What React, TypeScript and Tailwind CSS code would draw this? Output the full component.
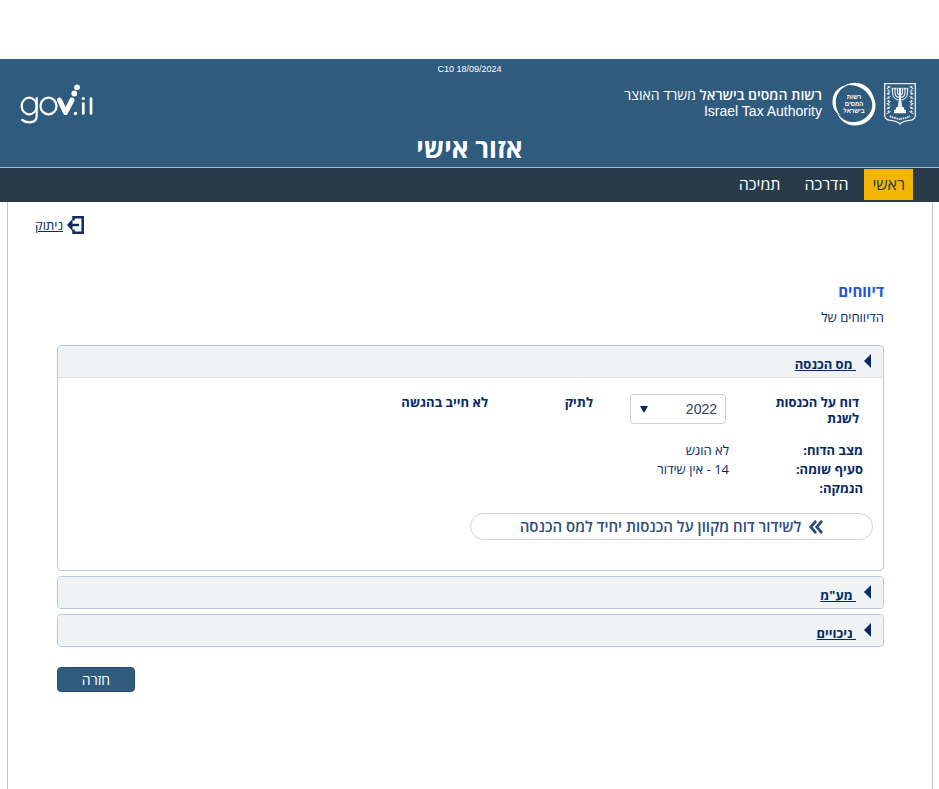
import { useState } from 'react'
import type { ReactNode } from 'react'

function StateEmblem() {
  return (
    <svg viewBox="0 0 32 42" className="h-[42px] w-8" fill="none" stroke="#e6edf3" aria-label="סמל המדינה" role="img">
      <path d="M.7.7h30.6v31.5c0 3.6-2.600 4.800-5.600 5.200-4.200.5-7.600 1-9.700 3.600-2.100-2.600-5.500-3.100-9.700-3.600-3-.4-5.600-1.600-5.600-5.200z" strokeWidth="1.300" />
      <path d="M4.500 3v28M27.500 3v28" strokeWidth="1.800" strokeDasharray="2 1.500" />
      <path d="M2.500 6l4-2.500M2.500 11l4-2.500M2.500 16l4-2.500M2.500 21l4-2.500M2.500 26l4-2.500M2.500 31l4-2.500M29.500 6l-4-2.500M29.500 11l-4-2.500M29.500 16l-4-2.500M29.500 21l-4-2.500M29.500 26l-4-2.500M29.500 31l-4-2.500" strokeWidth="1" />
      <path d="M8.500 6v3.500c0 4.500 3 7.500 7.500 7.500s7.500-3 7.500-7.500V6M11 6v3.500c0 3 2 5 5 5s5-2 5-5V6M13.500 6v3c0 1.800 1 3 2.500 3s2.500-1.200 2.500-3V6" strokeWidth="1.200" />
      <path d="M7.500 5.500h17" strokeWidth="1.300" strokeDasharray="2 .5" />
      <path d="M16 5v17" strokeWidth="2" />
      <path d="M14.500 18h3l.7 6h-4.400z" fill="#e6edf3" stroke="none" />
      <path d="M12.500 24h7l1.200 3h-9.400zM10 27h12v3.200H10z" fill="#fff" stroke="none" />
      <path d="M6 33c3 2.500 7 1.500 10 3.700 3-2.200 7-1.200 10-3.700" strokeWidth="1.800" strokeDasharray="1.500 .8" />
    </svg>
  )
}

function TaxAuthorityLogo() {
  return (
    <svg viewBox="0 0 44 44" className="size-11" role="img" aria-label="רשות המסים בישראל">
      <path
        fill="#fff"
        d="M13 3.500C21-1.500 33 0 39 9.500c4 6.500 4.500 14 1 21 1.300-7.500.2-13.500-4-18.500C30.500 4.800 21 2 13 3.500z"
      />
      <path fill="#fff" d="M17 3C8 5.500 3.500 13 3.800 21c.2 5 1.700 9.500 5 13C3 30.500 0 25 .5 18.500 1.200 9 8.500 3 17 3z" />
      <path fill="#fff" d="M4.500 30c4 7 11 10.500 18 10C33 39.300 40.500 31.500 41 20c.2-2.500-.1-4.500-.8-6.500C43.500 18 44.300 23.500 42.700 29 40 38 32 43.700 22.500 43.500 14 43.200 7.500 38 4.500 30z" />
      <g fill="#fff" fontFamily="Liberation Sans, sans-serif" fontWeight="700" fontSize="6" textAnchor="middle" direction="rtl">
        <text x="22" y="17">רשות</text>
        <text x="22" y="24">המסים</text>
        <text x="22" y="31">בישראל</text>
      </g>
    </svg>
  )
}

function GovLogo() {
  return (
    <svg viewBox="0 0 74 41" className="h-[41px] w-[74px]" fill="none" stroke="#fff" role="img" aria-label="gov.il">
      <ellipse cx="9.200" cy="22" rx="7.500" ry="8.300" strokeWidth="2.200" />
      <path d="M16.700 14v18c0 4-2.800 6.300-7.500 6.300-3 0-5-.8-7-2.300" strokeWidth="2.200" strokeLinecap="round" />
      <ellipse cx="28.500" cy="22" rx="8" ry="8.300" strokeWidth="2.200" />
      <path d="M39.500 16l6 12.500L52 16" strokeWidth="5" strokeLinecap="round" strokeLinejoin="round" />
      <g fill="#fff" stroke="none">
        <circle cx="54.300" cy="9.500" r="2.900" />
        <circle cx="57" cy="3.300" r="2.900" />
        <circle cx="55.500" cy="29.500" r="1.800" />
        <circle cx="63.300" cy="14.500" r="1.600" />
      </g>
      <path d="M63.300 19.500v10M71 14.500v15" strokeWidth="2.700" strokeLinecap="round" />
    </svg>
  )
}

function LogoutIcon() {
  return (
    <svg viewBox="0 0 17 18" className="h-[18px] w-[17px]" fill="none" stroke="#0d2b60" aria-hidden="true">
      <path d="M6.500 4.500V1.300h9.200v15.400H6.500v-3.200" strokeWidth="2.500" />
      <path d="M4 9h8" strokeWidth="2.500" />
      <path d="M0 9l5.500-6v12z" fill="#0d2b60" stroke="none" />
    </svg>
  )
}

type SectionProps = { title: string; open: boolean; onToggle: () => void; children?: ReactNode }

function Section({ title, open, onToggle, children }: SectionProps) {
  return (
    <section className="overflow-hidden rounded border border-[#b9cae0] bg-white">
      <h2 className={open ? 'border-b border-[#d9dfe4] bg-[#eff3f4]' : 'bg-[#eff3f4]'}>
        <button
          type="button"
          aria-expanded={open}
          onClick={onToggle}
          className="flex h-[31px] w-full items-start gap-2 px-3 text-[13px] leading-5 font-bold"
        >
          <svg viewBox="0 0 7 14" className="mt-2 h-3.5 w-[7px]" fill="#062a63" aria-hidden="true">
            <path d="M7 0v14L0 7z" />
          </svg>
          <span className="mt-2 whitespace-pre underline">{' ' + title}</span>
        </button>
      </h2>
      {open && children}
    </section>
  )
}

const facts = [
  { label: 'מצב הדוח:', value: 'לא הוגש' },
  { label: 'סעיף שומה:', value: '14 - אין שידור' },
  { label: 'הנמקה:', value: '' },
]

export default function App() {
  const [openSection, setOpenSection] = useState('income')
  const toggle = (id: string) => setOpenSection(openSection === id ? '' : id)

  return (
    <div
      dir="rtl"
      className="flex min-h-screen flex-col bg-white pt-[59px] font-['Open_Sans','Liberation_Sans',sans-serif] text-[13px] text-[#062a63]"
    >
      <header className="border-b border-[#a9bfce] bg-[#2f5b7f] pt-1 text-white">
        <p className="text-center font-['Liberation_Sans',Arial,sans-serif] text-[9px] leading-3" dir="ltr">C10 18/09/2024</p>
        <div className="flex items-center justify-between pt-[7px] pr-[23px] pl-5">
          <div className="flex items-center gap-2">
            <StateEmblem />
            <TaxAuthorityLogo />
            <div className="px-0.5 pb-0.5 text-sm leading-[17px]">
              <p>
                <strong className="font-semibold">רשות המסים בישראל</strong> משרד האוצר
              </p>
              <p dir="ltr" className="text-right font-['Liberation_Sans',Arial,sans-serif]">Israel Tax Authority</p>
            </div>
          </div>
          <GovLogo />
        </div>
        <h1 className="pt-1.5 pb-[3px] text-center text-[26px] leading-8 font-bold">אזור אישי</h1>
      </header>

      <nav className="flex items-center gap-2 bg-[#293b4b] px-[26px] pt-px pb-0.5 text-base leading-[31px] text-white">
        <a href="#main" className="bg-[#f3b500] px-2 text-[#293b4b]">ראשי</a>
        <a href="#guide" className="px-2">הדרכה</a>
        <a href="#support" className="px-2">תמיכה</a>
      </nav>

      <main className="mr-1.5 ml-[7px] grow border-x border-[#c4c4c4] pt-[13px] pr-12 pl-[49px]">
        <div className="-ml-[22px] flex justify-end">
          <a href="#logout" className="flex items-center gap-1 leading-5">
            <LogoutIcon />
            <span className="underline">ניתוק</span>
          </a>
        </div>

        <h2 className="mt-[46px] text-[15px] leading-5 font-bold text-[#2354dc]">דיווחים</h2>
        <p className="mt-1.5 leading-5">הדיווחים של</p>

        <div className="mt-[18px] flex flex-col gap-[5px]">
          <Section title="מס הכנסה" open={openSection === 'income'} onToggle={() => toggle('income')}>
            <div className="px-2.5 pb-[30px]">
              <div className="flex items-start pt-4 pr-3.5 leading-4 font-bold">
                <label htmlFor="year" className="w-[133px] pl-10">דוח על הכנסות לשנת</label>
                <div className="relative font-normal">
                  <select
                    id="year"
                    defaultValue="2022"
                    className="h-[30px] w-24 appearance-none rounded border border-[#cfcfcf] bg-white px-2 font-['Liberation_Sans',Arial,sans-serif] text-sm text-[#2d4266]"
                  >
                    <option>2022</option>
                    <option>2021</option>
                    <option>2020</option>
                  </select>
                  <svg viewBox="0 0 8 7" className="pointer-events-none absolute top-3 left-2.5 h-[7px] w-2" fill="#062a63" aria-hidden="true">
                    <path d="M0 0h8L4 7z" />
                  </svg>
                </div>
                <span className="mr-[37px] w-[105px]">לתיק</span>
                <span>לא חייב בהגשה</span>
              </div>

              <dl className="mt-[15px] pr-2.5 leading-[19px]">
                {facts.map((fact) => (
                  <div key={fact.label} className="flex">
                    <dt className="w-[134px] font-bold">{fact.label}</dt>
                    <dd>{fact.value}</dd>
                  </div>
                ))}
              </dl>

              <button
                type="button"
                className="mt-[15px] flex h-[27px] w-[403px] items-center justify-center gap-2 rounded-full border border-[#ccd3e0] text-[15px] font-semibold text-[#2d4d7d]"
              >
                <svg viewBox="0 0 14 14" className="size-3.5" fill="none" stroke="currentColor" strokeWidth="2.800" aria-hidden="true">
                  <path d="M7 .8L1.800 7 7 13.200M13 .8L7.800 7l5.200 6.200" />
                </svg>
                לשידור דוח מקוון על הכנסות יחיד למס הכנסה
              </button>
            </div>
          </Section>
          <Section title={'מע"מ'} open={openSection === 'vat'} onToggle={() => toggle('vat')} />
          <Section title="ניכויים" open={openSection === 'deductions'} onToggle={() => toggle('deductions')} />
        </div>

        <div className="mt-5 flex justify-end">
          <button type="button" className="h-[25px] w-[78px] rounded border border-[#234a6d] bg-[#2f5b7f] text-sm text-white">
            חזרה
          </button>
        </div>
      </main>
    </div>
  )
}
